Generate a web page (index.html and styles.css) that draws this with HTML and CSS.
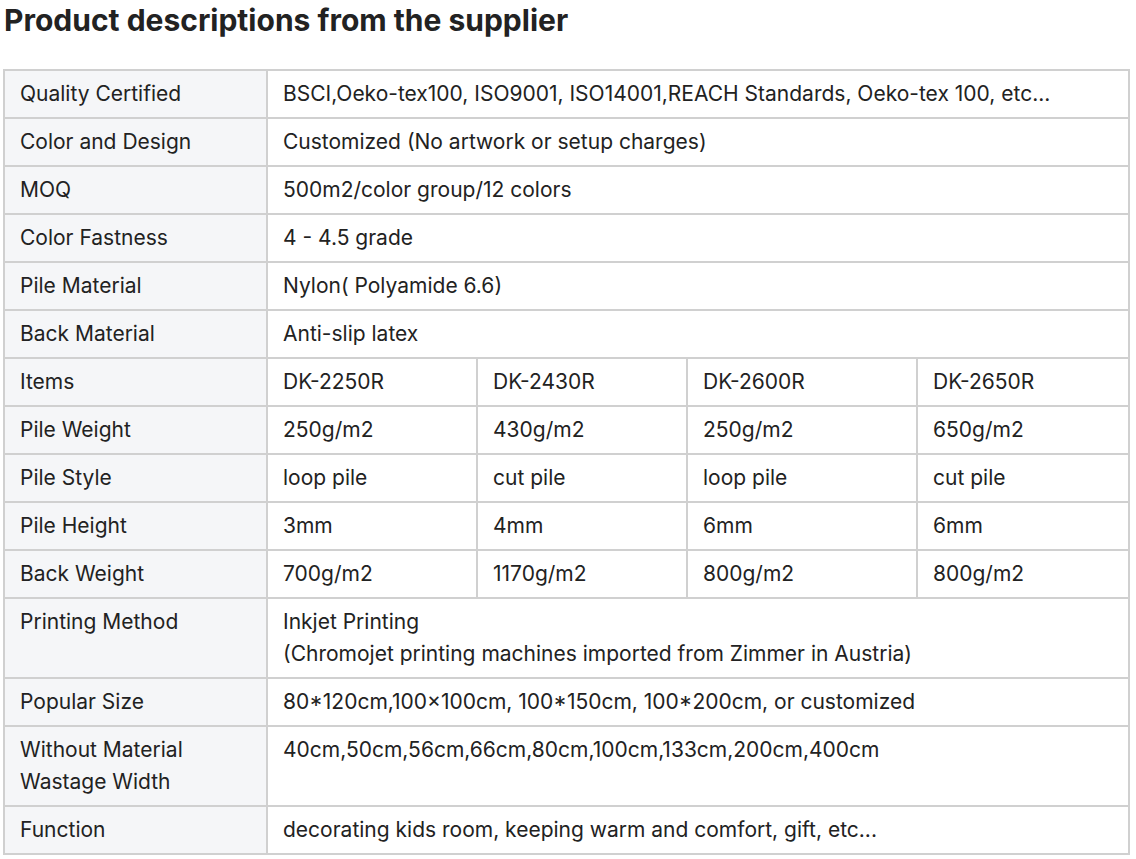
FILE: index.html
```html
<!DOCTYPE html>
<html>
<head>
<meta charset="utf-8">
<link rel="stylesheet" href="styles.css">
</head>
<body>
<div class="page">
  <h2 class="title">Product descriptions from the supplier</h2>
  <table class="spec">
    <colgroup>
      <col class="c-label">
      <col class="c-a">
      <col class="c-b">
      <col class="c-c">
      <col class="c-d">
    </colgroup>
    <tbody>
      <tr><th>Quality Certified</th><td colspan="4">BSCI,Oeko-tex100, ISO9001, ISO14001,REACH Standards, Oeko-tex 100, etc...</td></tr>
      <tr><th>Color and Design</th><td colspan="4">Customized (No artwork or setup charges)</td></tr>
      <tr><th>MOQ</th><td colspan="4">500m2/color group/12 colors</td></tr>
      <tr><th>Color Fastness</th><td colspan="4">4 - 4.5 grade</td></tr>
      <tr><th>Pile Material</th><td colspan="4">Nylon( Polyamide 6.6)</td></tr>
      <tr><th>Back Material</th><td colspan="4">Anti-slip latex</td></tr>
      <tr><th>Items</th><td>DK-2250R</td><td>DK-2430R</td><td>DK-2600R</td><td>DK-2650R</td></tr>
      <tr><th>Pile Weight</th><td>250g/m2</td><td>430g/m2</td><td>250g/m2</td><td>650g/m2</td></tr>
      <tr><th>Pile Style</th><td>loop pile</td><td>cut pile</td><td>loop pile</td><td>cut pile</td></tr>
      <tr><th>Pile Height</th><td>3mm</td><td>4mm</td><td>6mm</td><td>6mm</td></tr>
      <tr><th>Back Weight</th><td>700g/m2</td><td>1170g/m2</td><td>800g/m2</td><td>800g/m2</td></tr>
      <tr><th>Printing Method</th><td colspan="4">Inkjet Printing<br>(Chromojet printing machines imported from Zimmer in Austria)</td></tr>
      <tr><th>Popular Size</th><td colspan="4">80*120cm,100×100cm, 100*150cm, 100*200cm, or customized</td></tr>
      <tr><th>Without Material<br>Wastage Width</th><td colspan="4">40cm,50cm,56cm,66cm,80cm,100cm,133cm,200cm,400cm</td></tr>
      <tr><th>Function</th><td colspan="4">decorating kids room, keeping warm and comfort, gift, etc...</td></tr>
    </tbody>
  </table>
</div>
</body>
</html>
```

FILE: styles.css
```css
html, body {
  margin: 0;
  padding: 0;
  background: #ffffff;
}

body {
  font-family: Inter, "Noto Sans", "Liberation Sans", sans-serif;
  color: #222222;
}

.page {
  padding: 0 8px 0 3px;
}

.title {
  margin: 0;
  padding: 2px 0 0 1px;
  font-size: 30px;
  line-height: 36px;
  font-weight: 700;
  color: #222222;
  height: 69px;
  box-sizing: border-box;
}

.spec {
  width: 1125px;
  border-collapse: collapse;
  table-layout: fixed;
  font-size: 21px;
  line-height: 32px;
}

.c-label { width: 263px; }
.c-a { width: 210px; }
.c-b { width: 210px; }
.c-c { width: 230px; }
.c-d { width: 212px; }

.spec th,
.spec td {
  border: 2px solid #d0d0d0;
  padding: 7px 15px;
  text-align: left;
  vertical-align: top;
  font-weight: 400;
  color: #222222;
}

.spec th {
  background: #f5f6f8;
}

.spec td {
  background: #ffffff;
}
```
